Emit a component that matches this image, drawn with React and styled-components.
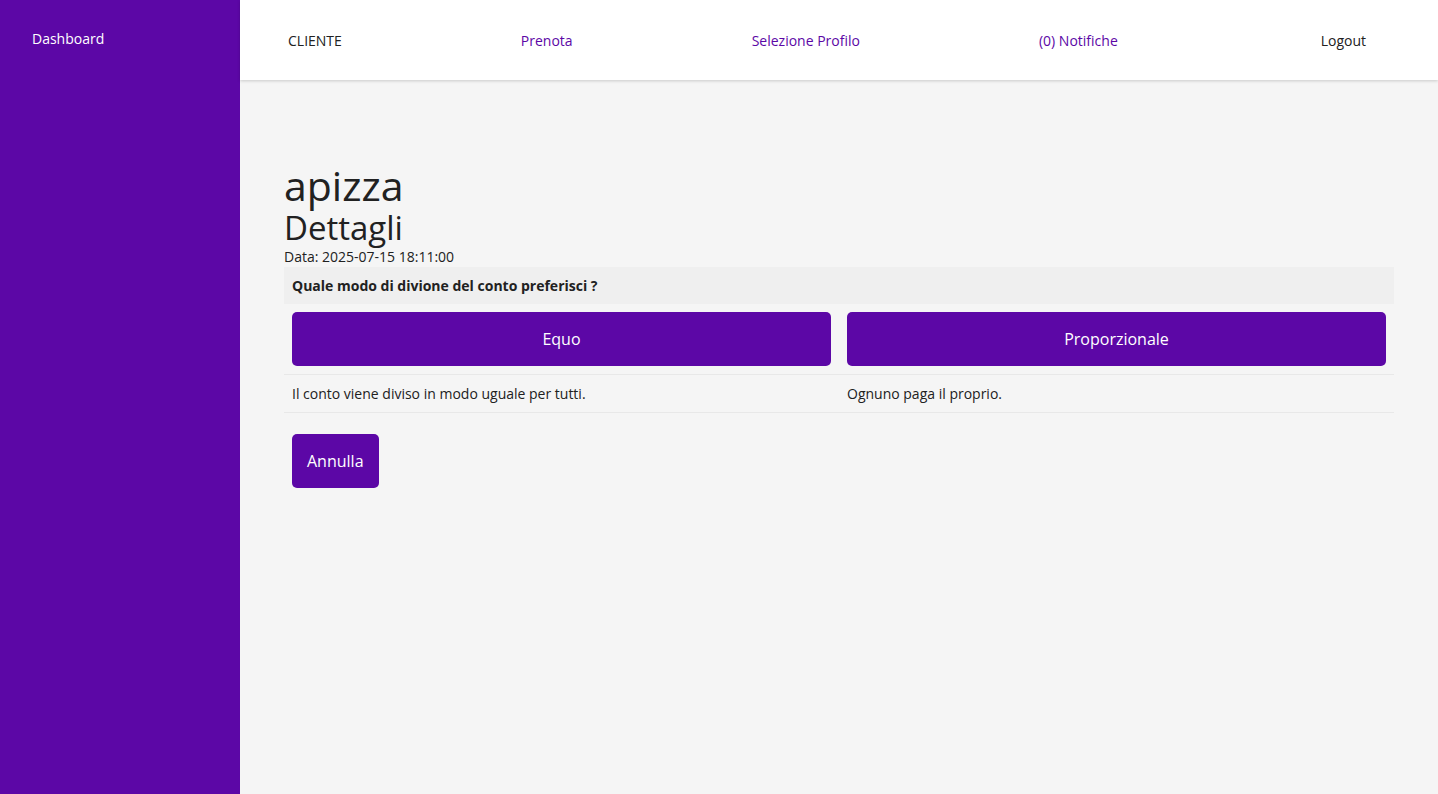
import React from "react";
import styled, { createGlobalStyle } from "styled-components";

const purple = "#5c07a6";

const GlobalStyle = createGlobalStyle`
  html, body {
    margin: 0;
    padding: 0;
    background: #f5f5f5;
    font-family: "Open Sans", "Noto Sans", sans-serif;
    color: #212121;
  }
`;

const Layout = styled.div`
  display: flex;
  min-height: 794px;
`;

const Sidebar = styled.aside`
  width: 240px;
  flex-shrink: 0;
  background: ${purple};
  padding: 29px 32px;
  box-sizing: border-box;
`;

const SideLink = styled.div`
  color: #fff;
  font-size: 14px;
  line-height: 20px;
`;

const Main = styled.div`
  flex: 1;
  display: flex;
  flex-direction: column;
`;

const Header = styled.header`
  height: 80px;
  box-sizing: border-box;
  background: #fff;
  box-shadow: 0 1px 3px rgba(0, 0, 0, 0.18);
  display: flex;
  align-items: center;
  padding: 2px 72px 0 48px;
  gap: 179px;
  font-size: 14px;
`;

const NavItem = styled.span`
  color: ${(p) => (p.$link ? purple : "#212121")};
  margin-left: ${(p) => (p.$right ? "auto" : "0")};
  line-height: 20px;
`;

const Content = styled.main`
  padding: 81px 44px 40px;
`;

const Title = styled.h1`
  margin: 0;
  font-size: 41px;
  font-weight: 400;
  line-height: 48px;
`;

const Subtitle = styled.h2`
  margin: 0;
  font-size: 33px;
  font-weight: 400;
  line-height: 38px;
`;

const DateLine = styled.div`
  font-size: 14px;
  line-height: 20px;
`;

const Table = styled.table`
  width: 100%;
  border-collapse: collapse;
  font-size: 14px;
`;

const HeadCell = styled.th`
  background: #efefef;
  text-align: left;
  padding: 8px;
  line-height: 21px;
  font-weight: 700;
`;

const Cell = styled.td`
  width: 50%;
  padding: 8px;
  line-height: 21px;
  border-bottom: 1px solid #e8e8e8;
`;

const Button = styled.button`
  display: block;
  width: ${(p) => (p.$full ? "100%" : "auto")};
  height: 54px;
  padding: 0 15px;
  border: none;
  border-radius: 5px;
  background: ${purple};
  color: #fff;
  font-family: inherit;
  font-size: 16px;
  cursor: pointer;
`;

const Actions = styled.div`
  padding: 21px 8px;
`;

export default function App() {
  return (
    <>
      <GlobalStyle />
      <Layout>
        <Sidebar>
          <SideLink>Dashboard</SideLink>
        </Sidebar>
        <Main>
          <Header>
            <NavItem>CLIENTE</NavItem>
            <NavItem $link>Prenota</NavItem>
            <NavItem $link>Selezione Profilo</NavItem>
            <NavItem $link>(0) Notifiche</NavItem>
            <NavItem $right>Logout</NavItem>
          </Header>
          <Content>
            <Title>apizza</Title>
            <Subtitle>Dettagli</Subtitle>
            <DateLine>Data: 2025-07-15 18:11:00</DateLine>
            <Table>
              <thead>
                <tr>
                  <HeadCell colSpan={2}>Quale modo di divione del conto preferisci ?</HeadCell>
                </tr>
              </thead>
              <tbody>
                <tr>
                  <Cell>
                    <Button $full>Equo</Button>
                  </Cell>
                  <Cell>
                    <Button $full>Proporzionale</Button>
                  </Cell>
                </tr>
                <tr>
                  <Cell>Il conto viene diviso in modo uguale per tutti.</Cell>
                  <Cell>Ognuno paga il proprio.</Cell>
                </tr>
              </tbody>
            </Table>
            <Actions>
              <Button>Annulla</Button>
            </Actions>
          </Content>
        </Main>
      </Layout>
    </>
  );
}
